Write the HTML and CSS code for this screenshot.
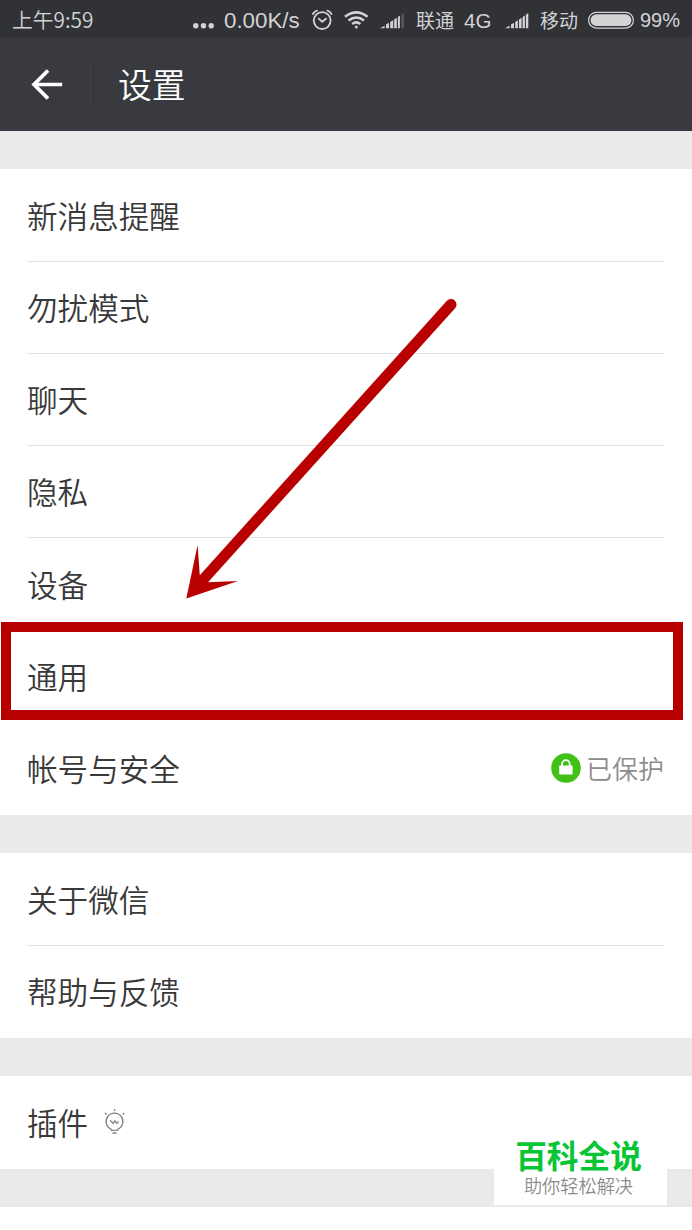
FILE: index.html
```html
<!DOCTYPE html>
<html lang="zh-CN">
<head>
    <meta charset="UTF-8">
    <meta name="viewport" content="width=device-width, initial-scale=1.0">
    <title>设置</title>
    <link rel="stylesheet" href="styles.css">
</head>
<body>
    <!-- Status bar -->
    <div class="status-bar">
        <span class="clock">上午9:59</span>
        <svg width="22" height="38" viewBox="0 0 22 38">
            <circle cx="2.8" cy="24.8" r="2.7"/><circle cx="10.5" cy="24.8" r="2.7"/><circle cx="18.2" cy="24.8" r="2.7"/>
        </svg>
        <span class="latin speed">0.00K/s</span>
        <svg class="line" width="22" height="38" viewBox="0 0 22 38" stroke-width="1.8" stroke-linecap="round">
            <circle cx="10.2" cy="19.6" r="8.4"/>
            <path d="M6.8 17.6l3.4 3.2 3.8-3M.9 13q1.4-2.6 4-3.4M19.5 13q-1.4-2.6-4-3.4"/>
        </svg>
        <svg class="line" width="26" height="38" viewBox="0 0 26 38" stroke-width="2.6">
            <path d="M1 15.8q11.3-9 22.6 0M4.6 19.6q7.7-6.2 15.4 0M8.2 23q4.1-3.2 8.2 0"/>
            <circle cx="12.3" cy="26" r=".6" stroke-width="1.8"/>
        </svg>
        <svg width="25" height="38" viewBox="0 0 25 38">
            <path d="M0 27.3l4.6-2.6v2.6zM6 23.5l3-1.8v5.6H6zM10.2 21l3-1.8v8.1h-3zM14.2 18.5l2.6-1.8v10.6h-2.6zM17.9 16l2-1.5v12.8h-2z"/>
            <path class="dim" d="M21.3 13.7l2.7-1.7v15.3h-2.7z"/>
        </svg>
        <span>联通</span>
        <span class="latin">4G</span>
        <svg width="25" height="38" viewBox="0 0 25 38">
            <path d="M0 27.3l4.6-2.6v2.6zM6 23.5l3-1.8v5.6H6zM10.2 21l2.7-1.8v8.1h-2.7zM14 18.5l2.6-1.8v10.6H14zM17.6 16l2.3-1.5v12.8h-2.3zM20.9 13.7l2.4-1.7v15.3h-2.4z"/>
        </svg>
        <span>移动</span>
        <svg width="47" height="38" viewBox="0 0 47 38">
            <rect class="line" x=".6" y="11.3" width="44.8" height="15.8" rx="7.9" stroke-width="1.2"/>
            <rect x="2.6" y="13.3" width="40.8" height="11.8" rx="5.9"/>
        </svg>
        <span class="latin percent">99%</span>
    </div>

    <!-- Title bar -->
    <div class="title-bar">
        <svg class="back" width="34" height="34" viewBox="0 0 34 34" fill="none" stroke="#fff" stroke-width="3.7">
            <path d="M18 3.5L4 17.5l14 14M4 17.5H32.2"/>
        </svg>
        <h1>设置</h1>
    </div>

    <div class="list">
        <div class="row">新消息提醒</div>
        <div class="row">勿扰模式</div>
        <div class="row">聊天</div>
        <div class="row">隐私</div>
        <div class="row">设备</div>
        <div class="row">通用</div>
        <div class="row plain">帐号与安全
            <span class="protect">
                <svg width="30" height="30" viewBox="0 0 30 30">
                    <circle cx="15" cy="15" r="14.8" fill="#41c015"/>
                    <rect x="8.2" y="12.4" width="13.4" height="9" rx=".6" fill="#fff"/>
                    <path d="M11.1 14v-3a3.8 3.8 0 0 1 7.6 0V14" fill="none" stroke="#fff" stroke-width="1.8"/>
                </svg>
                已保护
            </span>
        </div>
    </div>

    <div class="list">
        <div class="row">关于微信</div>
        <div class="row">帮助与反馈</div>
    </div>

    <div class="list">
        <div class="row">插件
            <svg class="bulb" width="22" height="26" viewBox="0 0 22 26" fill="none" stroke="#858585" stroke-width="1.3">
                <path d="M7.6 20.4a8.4 8.4 0 1 1 5.8 0M6.6 21.4h7.8M8.4 24h4.2M10.5 0v2M.8 4l1.8 1.6M20.4 4l-1.8 1.6"/>
                <path d="M6 11.2l3.2 3.2 1.6-2.8 2 2.8 1.7-2"/>
            </svg>
        </div>
    </div>

    <div class="footer"></div>

    <!-- Marks over the list -->
    <div class="highlight"></div>
    <svg class="arrow" width="280" height="310" viewBox="0 0 280 310">
        <path d="M266.9 10.8a5.5 5.5 0 0 1 8.2 7.4L28 292.3l30-1.3L6.3 308.5 17.6 255l2.2 30.3z" fill="#b90000"/>
    </svg>
    <div class="watermark">
        <strong>百科全说</strong>
        <span>助你轻松解决</span>
    </div>
</body>
</html>
```
FILE: styles.css
```css
html, body {
    margin: 0;
    padding: 0;
}

body {
    position: relative;
    height: 1230px;
    overflow: hidden;
    display: flex;
    flex-direction: column;
    font-family: "Noto Sans CJK SC", sans-serif;
    color: #393939;
    background-color: #eaeaea;
}

svg {
    display: block;
    flex: none;
}

/* Status bar: one column per indicator */
.status-bar {
    display: grid;
    grid-template-columns: 181px 31px 88px 32px 36px 36px 48px 41px 35px 48px 52px 50px;
    align-items: center;
    height: 38px;
    padding-left: 12px;
    flex: none;
    white-space: nowrap;
    font-size: 19px;
    line-height: 37px;
    color: #d3d3d5;
    background-color: #313235;
}

.status-bar svg {
    fill: #d3d3d5;
}

.status-bar .line {
    fill: none;
    stroke: #d3d3d5;
}

.status-bar .dim {
    fill: #55565a;
}

.clock {
    font-size: 20.8px;
    font-weight: 350;
}

.latin {
    font-family: "Liberation Sans", Arial, sans-serif;
    font-size: 20.5px;
    padding-top: 2px;
}

.speed {
    font-size: 22.3px;
}

.percent {
    font-size: 20px;
}

/* Title bar */
.title-bar {
    display: flex;
    align-items: center;
    height: 92.5px;
    flex: none;
    color: #fff;
    background-color: #393a3f;
}

.back {
    margin: 0 29px 0 30px;
}

h1 {
    margin: 0;
    padding-left: 24px;
    border-left: 1px solid #303135;
    font-size: 33.8px;
    font-weight: 350;
    line-height: 50px;
}

/* Settings groups */
.list {
    margin-top: 38.4px;
    padding: 0 27px .7px;
    flex: none;
    background-color: #fff;
}

.row {
    display: flex;
    align-items: center;
    box-sizing: border-box;
    height: 92.15px;
    font-size: 30.6px;
    font-weight: 350;
    line-height: 44px;
}

.row + .row {
    padding-bottom: 1px;
    border-top: 1px solid #e3e3e3;
}

.row.plain {
    border-top-color: #fff;
}

.protect {
    display: flex;
    align-items: center;
    gap: 5px;
    margin-right: 1px;
    margin-left: auto;
    font-size: 26px;
    color: #8c8c8c;
}

.bulb {
    margin-left: 16px;
}

.footer {
    flex: 1;
    margin-top: 37.7px;
    background-color: #fff;
}

/* Marks over the list */
.highlight {
    position: absolute;
    left: 1px;
    top: 622px;
    width: 662px;
    height: 78px;
    border: 10px solid #b90000;
}

.arrow {
    position: absolute;
    left: 180px;
    top: 290px;
}

.watermark {
    position: absolute;
    left: 494px;
    top: 1132px;
    width: 173px;
    height: 73px;
    display: flex;
    flex-direction: column;
    align-items: center;
    background-color: #fff;
}

.watermark strong {
    margin-left: -4px;
    font-size: 31.7px;
    font-weight: 700;
    line-height: 44px;
    color: #08c535;
}

.watermark span {
    margin-left: -4px;
    font-size: 18.2px;
    font-weight: 350;
    line-height: 18px;
    color: #8c8c8c;
}
```
